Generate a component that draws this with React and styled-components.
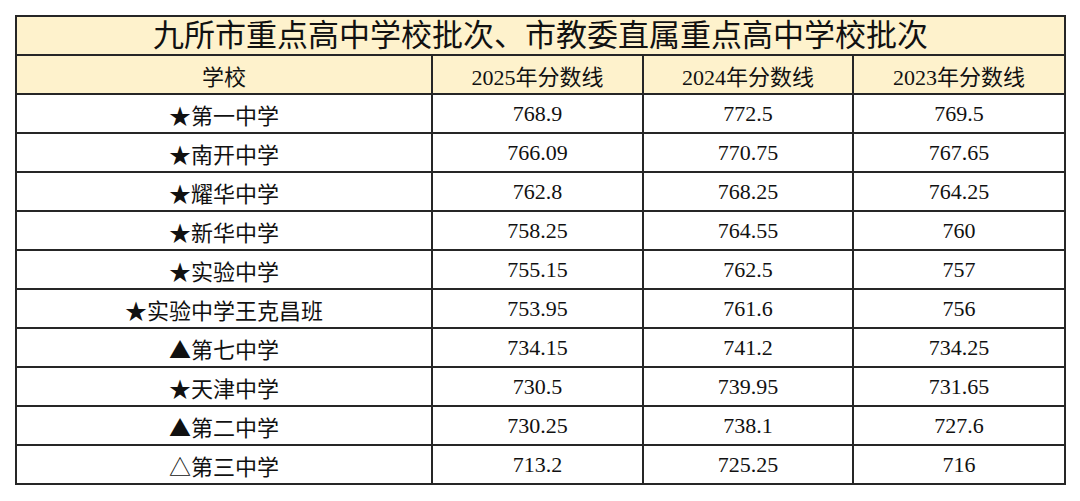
import React from "react";
import styled, { createGlobalStyle } from "styled-components";

const Global = createGlobalStyle`
  html, body { margin: 0; padding: 0; background: #ffffff; }
  body { font-family: "Liberation Serif", "Noto Sans CJK SC", serif; color: #111; }
`;

const Page = styled.div`
  padding: 15px 0 0 15px;
`;

const Table = styled.table`
  border-collapse: collapse;
  table-layout: fixed;
  width: 1049px;
  border: 2px solid #262626;
`;

const TitleCell = styled.th`
  height: 37px;
  padding: 0;
  background: #fef2cc;
  border: 2px solid #262626;
  font-size: 31px;
  font-weight: 400;
  line-height: 1;
  text-align: center;
  color: #111;
`;

const HeadCell = styled.th`
  height: 37px;
  padding: 0;
  background: #fef2cc;
  border: 2px solid #262626;
  font-size: 22px;
  font-weight: 400;
  text-align: center;
  color: #111;
`;

const Cell = styled.td`
  height: 37px;
  padding: 0;
  border: 2px solid #262626;
  font-size: 22px;
  text-align: center;
  color: #111;
  background: #fff;
`;

const Mark = styled.span`
  font-family: "Noto Sans CJK SC", "DejaVu Sans", sans-serif;
  font-size: 22px;
`;

const rows = [
  ["★", "第一中学", "768.9", "772.5", "769.5"],
  ["★", "南开中学", "766.09", "770.75", "767.65"],
  ["★", "耀华中学", "762.8", "768.25", "764.25"],
  ["★", "新华中学", "758.25", "764.55", "760"],
  ["★", "实验中学", "755.15", "762.5", "757"],
  ["★", "实验中学王克昌班", "753.95", "761.6", "756"],
  ["▲", "第七中学", "734.15", "741.2", "734.25"],
  ["★", "天津中学", "730.5", "739.95", "731.65"],
  ["▲", "第二中学", "730.25", "738.1", "727.6"],
  ["△", "第三中学", "713.2", "725.25", "716"],
];

export default function App() {
  return (
    <Page>
      <Global />
      <Table>
        <colgroup>
          <col style={{ width: 416 }} />
          <col style={{ width: 211 }} />
          <col style={{ width: 210 }} />
          <col style={{ width: 212 }} />
        </colgroup>
        <thead>
          <tr>
            <TitleCell colSpan={4}>九所市重点高中学校批次、市教委直属重点高中学校批次</TitleCell>
          </tr>
          <tr>
            <HeadCell>学校</HeadCell>
            <HeadCell>2025年分数线</HeadCell>
            <HeadCell>2024年分数线</HeadCell>
            <HeadCell>2023年分数线</HeadCell>
          </tr>
        </thead>
        <tbody>
          {rows.map((r) => (
            <tr key={r[1]}>
              <Cell>
                <Mark>{r[0]}</Mark>
                {r[1]}
              </Cell>
              <Cell>{r[2]}</Cell>
              <Cell>{r[3]}</Cell>
              <Cell>{r[4]}</Cell>
            </tr>
          ))}
        </tbody>
      </Table>
    </Page>
  );
}
